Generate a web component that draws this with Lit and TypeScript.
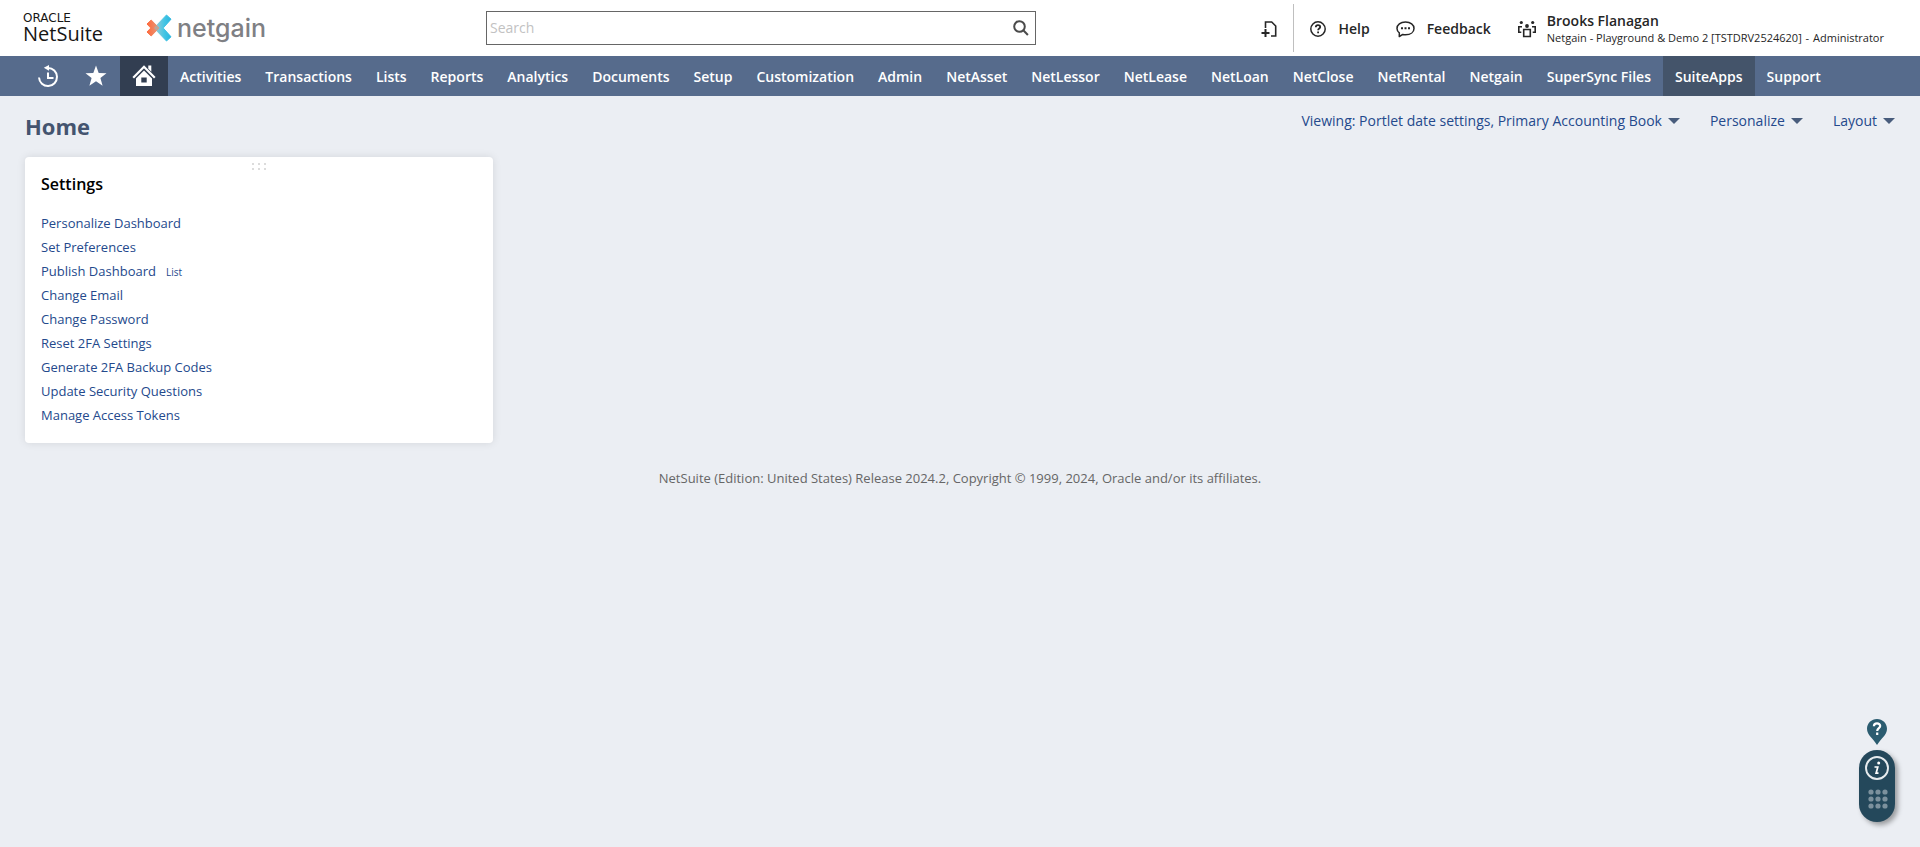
import { LitElement, html, css, svg } from "lit";
import { customElement } from "lit/decorators.js";

const MENU = [
  "Activities", "Transactions", "Lists", "Reports", "Analytics", "Documents", "Setup",
  "Customization", "Admin", "NetAsset", "NetLessor", "NetLease", "NetLoan", "NetClose",
  "NetRental", "Netgain", "SuperSync Files", "SuiteApps", "Support",
];

const SETTINGS: { label: string; extra?: string }[] = [
  { label: "Personalize Dashboard" },
  { label: "Set Preferences" },
  { label: "Publish Dashboard", extra: "List" },
  { label: "Change Email" },
  { label: "Change Password" },
  { label: "Reset 2FA Settings" },
  { label: "Generate 2FA Backup Codes" },
  { label: "Update Security Questions" },
  { label: "Manage Access Tokens" },
];

const VIEW_MENUS = ["Viewing: Portlet date settings, Primary Accounting Book", "Personalize", "Layout"];

const gridDots = [7, 14, 21].flatMap((y) =>
  [7, 14, 21].map((x) => svg`<circle cx=${x} cy=${y} r="2.6"></circle>`)
);

@customElement("app-header")
class AppHeader extends LitElement {
  static styles = css`
    :host {
      display: grid;
      grid-template-columns: 463px minmax(200px, 550px) 1fr;
      align-items: center;
      height: 56px;
      padding: 0 36px 0 23px;
      background: #fff;
      color: #262626;
    }
    svg { display: block; flex: none; }
    a { color: inherit; text-decoration: none; }
    .logos { display: flex; align-items: center; gap: 43px; }
    .netsuite { display: flex; flex-direction: column; color: #161513; }
    .oracle { font: 400 12px/12px "DejaVu Sans", sans-serif; }
    .suite { font-size: 20px; line-height: 20px; }
    .netgain { display: flex; align-items: center; gap: 5px; color: #7f8084; font: 500 25px/30px Inter, sans-serif; }
    .search { display: flex; align-items: center; box-sizing: border-box; height: 34px; border: 1px solid #666; padding: 0 5px 0 2px; }
    .search input { flex: 1; min-width: 0; border: 0; outline: 0; padding: 0 1px; background: none; font: 14px/20px "Open Sans", sans-serif; color: #262626; }
    .search input::placeholder { color: #c2c2c2; opacity: 1; }
    .search button, .create { border: 0; background: none; padding: 0; color: inherit; }
    .tools { display: flex; align-items: center; justify-content: flex-end; white-space: nowrap; }
    .create { padding: 0 16px; }
    .divider { width: 1px; height: 48px; background: #bfbfbf; margin-right: 16px; }
    .tool { display: flex; align-items: center; gap: 12px; font-size: 14px; line-height: 20px; font-weight: 600; margin-right: 26px; }
    .create, .tool, .role { padding-top: 2px; }
    .role { display: flex; align-items: center; gap: 10px; }
    .who { display: flex; flex-direction: column; }
    .name { font-size: 14px; line-height: 18px; font-weight: 600; }
    .account { font-size: 11px; line-height: 16px; }
    .dash { padding: 0 1px; }
  `;
  render() {
    return html`
      <div class="logos">
        <a class="netsuite" href="#"><span class="oracle">ORACLE</span><span class="suite">NetSuite</span></a>
        <a class="netgain" href="#">
          <svg width="26" height="28" viewBox="0 0 26 28" aria-hidden="true">
            <defs>
              <linearGradient id="blue" x1="0" x2="1" y1=".5" y2=".5"><stop offset="0" stop-color="#a5cbd2"></stop><stop offset=".6" stop-color="#45c5e4"></stop><stop offset="1" stop-color="#27b5df"></stop></linearGradient>
              <linearGradient id="orange"><stop offset="0" stop-color="#ff6a3c"></stop><stop offset="1" stop-color="#e69a7c"></stop></linearGradient>
            </defs>
            <path d="M20.5 1 25 5.2 17.2 14 25 22.8 20.5 27 8 14z" fill="url(#blue)" stroke="url(#blue)" stroke-linejoin="round"></path>
            <path d="M5.2 6 13 14 5.2 22 1 18 4.8 14 1 10z" fill="url(#orange)" stroke="url(#orange)" stroke-linejoin="round"></path>
            <path d="M10.5 11.4 13 14l-2.5 2.6L8 14z" fill="#b9a79c"></path>
          </svg>
          <span>netgain</span>
        </a>
      </div>
      <form class="search" role="search">
        <input type="text" placeholder="Search" aria-label="Search" />
        <button type="button" aria-label="Run search">
          <svg width="18" height="18" viewBox="0 0 18 18" fill="none" stroke="#4a4a4a" stroke-width="2"><circle cx="7.5" cy="7.5" r="5.3"></circle><path d="m11.3 11.3 4.6 4.7"></path></svg>
        </button>
      </form>
      <div class="tools">
        <button class="create" type="button" aria-label="Create new">
          <svg width="16" height="18" viewBox="0 0 16 18" fill="none" stroke="#262626"><path stroke-width="1.6" d="M4.5 8V2h6.200l4 4v10H10"></path><path stroke-width="2" d="M4.500 9v8M.5 13h8"></path></svg>
        </button>
        <span class="divider"></span>
        <a class="tool" href="#">
          <svg width="16" height="16" viewBox="1 1 16 16" fill="none" stroke="#262626" stroke-width="1.5"><circle cx="9" cy="9" r="7.2"></circle><path stroke-width="1.8" d="M6.800 7.300c0-1.300.9-2.100 2.200-2.100s2.200.8 2.200 1.900c0 1.500-2.100 1.500-2.100 3.200M9.100 11.600v1.600"></path></svg>
          Help
        </a>
        <a class="tool" href="#">
          <svg width="19" height="18" viewBox="0 0 19 18" fill="none" stroke="#262626" stroke-width="1.5"><path d="M3.300 16.500v-3.700C1.700 11.600 1 10.100 1 8.400 1 4.700 4.400 2 9.500 2S18 4.700 18 8.400s-3.400 6.300-8.500 6.300c-1 0-1.900-.1-2.700-.3z" stroke-linejoin="round"></path><path d="M5 8.300h2M8.500 8.300h2M12 8.300h2" stroke-width="2"></path></svg>
          Feedback
        </a>
        <a class="role" href="#">
          <svg width="20" height="18" viewBox="0 0 20 18" fill="none" stroke="#262626" stroke-width="1.6"><path d="M6.700 9.500h6.600v7H6.700zM5 6.700H1.800v5.500h2.500M15 6.700h3.200v5.500h-2.500"></path><g fill="#262626" stroke="none"><circle cx="10" cy="6" r="1.900"></circle><circle cx="4.300" cy="2.500" r="1.600"></circle><circle cx="15.700" cy="2.500" r="1.600"></circle></g></svg>
          <span class="who">
            <span class="name">Brooks Flanagan</span>
            <span class="account">Netgain - Playground &amp; Demo 2 [TSTDRV2524620] <span class="dash">-</span> Administrator</span>
          </span>
        </a>
      </div>
    `;
  }
}

@customElement("app-menu")
class AppMenu extends LitElement {
  static styles = css`
    :host { display: block; background: #566b8c; }
    nav { display: flex; height: 40px; padding-left: 24px; white-space: nowrap; }
    a { display: flex; align-items: center; padding: 0 12px; color: #fff; text-decoration: none; font-size: 14px; font-weight: 600; }
    .icon { width: 48px; padding: 0; justify-content: center; }
    .home { background: #323e51; }
    .active { background: #44546a; }
  `;
  render() {
    return html`<nav aria-label="Main">
      <a class="icon" href="#" aria-label="Recent records">
        <svg width="24" height="24" viewBox="0 0 24 24" fill="none" stroke="#fff" stroke-width="2"><path d="M3 13.500a9 9 0 1 0 9-9.500"></path><path d="M12 8.500V14h5.500"></path><path d="M7.800 3.800 13 1v5.800z" fill="#fff" stroke="none"></path></svg>
      </a>
      <a class="icon" href="#" aria-label="Shortcuts">
        <svg width="24" height="24" viewBox="0 0 24 24"><path fill="#fff" d="m12 1.500 2.700 7.400 7.800.3-6.100 4.900 2.200 7.600L12 17.300l-6.600 4.400 2.200-7.600-6.100-4.900 7.800-.3z"></path></svg>
      </a>
      <a class="icon home" href="#" aria-label="Home">
        <svg width="24" height="24" viewBox="0 0 24 24"><path fill="none" stroke="#fff" stroke-width="2.200" d="M1.200 13.700 12 2.700l10.800 11"></path><path fill="#fff" d="M16.300 1.500h3v6.200l-3-3z"></path><path fill="#fff" fill-rule="evenodd" d="M12 6.500 20 14.500v7.500H4v-7.500zM9.300 13.500v5h5.400v-5z"></path></svg>
      </a>
      ${MENU.map((m) => html`<a href="#" class=${m === "SuiteApps" ? "active" : ""}>${m}</a>`)}
    </nav>`;
  }
}

@customElement("settings-portlet")
class SettingsPortlet extends LitElement {
  static styles = css`
    :host { display: block; box-sizing: border-box; width: 25%; min-width: 240px; padding: 6px 16px 16px; background: #fff; border-radius: 4px; box-shadow: 0 0 8px rgba(0, 0, 0, 0.1); }
    .grip { display: block; margin: 0 auto; }
    h2 { margin: 1px 0 15px; font-size: 16px; line-height: 24px; font-weight: 600; color: #000; }
    ul { margin: 0; padding: 0; list-style: none; }
    li { display: flex; align-items: baseline; gap: 10px; height: 24px; font-size: 13px; line-height: 24px; }
    a { color: #24498c; text-decoration: none; }
    .extra { font-size: 10px; }
  `;
  render() {
    return html`
      <svg class="grip" width="14" height="8" fill="#dcdcdc" aria-hidden="true"><path d="M0 0h2v2H0zM6 0h2v2H6zM12 0h2v2h-2zM0 5h2v2H0zM6 5h2v2H6zM12 5h2v2h-2z"></path></svg>
      <h2>Settings</h2>
      <ul>
        ${SETTINGS.map((s) => html`<li><a href="#">${s.label}</a>${s.extra ? html`<a class="extra" href="#">${s.extra}</a>` : ""}</li>`)}
      </ul>
    `;
  }
}

@customElement("help-dock")
class HelpDock extends LitElement {
  static styles = css`
    :host { position: fixed; right: 25px; bottom: 25px; display: flex; flex-direction: column; align-items: center; gap: 5px; }
    button { border: 0; padding: 0; background: none; display: block; }
    svg { display: block; }
    .pill { display: flex; flex-direction: column; align-items: center; gap: 5px; box-sizing: border-box; width: 36px; height: 72px; padding-top: 6px; border-radius: 18px; background: #24485b; box-shadow: 3px 3px 5px rgba(0, 0, 0, 0.35); }
  `;
  render() {
    return html`
      <button type="button" aria-label="Guided help">
        <svg width="20" height="26" viewBox="0 0 20 26"><path fill="#2b5c70" d="M10 0c5.600 0 10 4.300 10 9.800 0 6.200-6 9.700-10 16.200C6 19.500 0 16 0 9.800 0 4.300 4.400 0 10 0z"></path><path d="M6.900 7.300c0-1.900 1.200-2.900 3.100-2.900s3.200 1 3.200 2.700c0 2.200-3 2.100-3 5M10.200 13.600v2.300" fill="none" stroke="#fff" stroke-width="2.200"></path></svg>
      </button>
      <div class="pill">
        <button type="button" aria-label="Information">
          <svg width="24" height="24" viewBox="0 0 24 24"><circle cx="12" cy="12" r="11" fill="none" stroke="#e6ebee" stroke-width="1.900"></circle><circle cx="13.700" cy="7" r="1.500" fill="#fff"></circle><path d="M9.500 11h3.300l-1.700 6.200h2.400" fill="none" stroke="#fff" stroke-width="1.700"></path></svg>
        </button>
        <button type="button" aria-label="Apps">
          <svg width="28" height="28" viewBox="0 0 28 28" fill="#7c919d"><g transform="translate(1 0)">${gridDots}</g></svg>
        </button>
      </div>
    `;
  }
}

@customElement("app-root")
class AppRoot extends LitElement {
  static styles = css`
    :host { display: flex; flex-direction: column; min-height: 100vh; background: #ebeef3; font-family: "Open Sans", sans-serif; }
    .bar { display: flex; justify-content: space-between; align-items: flex-start; padding: 15px 25px 16px; }
    h1 { margin: 0; font-size: 22px; line-height: 30px; font-weight: 700; color: #44546f; }
    .views { display: flex; gap: 30px; }
    .views button { display: flex; align-items: center; gap: 6px; border: 0; padding: 0; background: none; font: 14px/20px "Open Sans", sans-serif; color: #24498c; }
    main { padding: 0 25px; }
    footer { padding: 25px; text-align: center; font-size: 13px; line-height: 20px; color: #666; }
  `;
  render() {
    return html`
      <app-header></app-header>
      <app-menu></app-menu>
      <div class="bar">
        <h1>Home</h1>
        <div class="views">
          ${VIEW_MENUS.map((v) => html`<button type="button">${v}<svg width="12" height="6" viewBox="0 0 12 6" aria-hidden="true"><path fill="#485c7c" d="M0 0h12L6 6z"></path></svg></button>`)}
        </div>
      </div>
      <main><settings-portlet></settings-portlet></main>
      <footer>NetSuite (Edition: United States) Release 2024.2, Copyright © 1999, 2024, Oracle and/or its affiliates.</footer>
      <help-dock></help-dock>
    `;
  }
}
